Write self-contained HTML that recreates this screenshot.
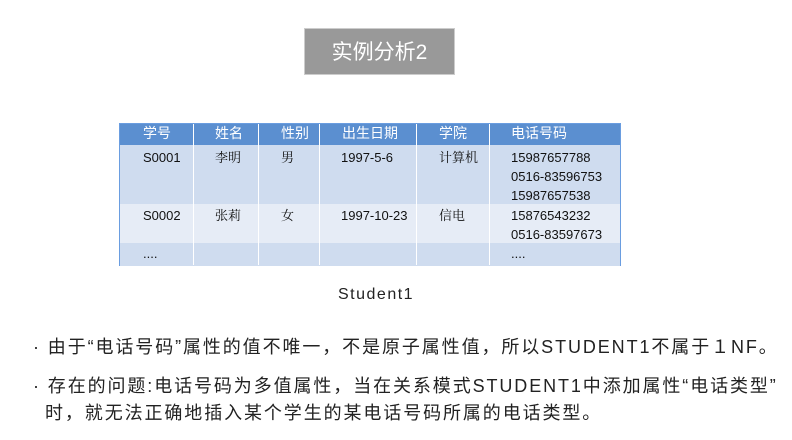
<!DOCTYPE html>
<html><head><meta charset="utf-8"><style>
body{margin:0;width:792px;height:440px;background:#fff;position:relative;overflow:hidden;font-family:"Liberation Sans","Noto Sans CJK SC",sans-serif}
.t{position:absolute;left:304px;top:28px;width:151px;height:47px;background:#999;color:#fff;font-size:21px;line-height:47px;text-align:center;border:1px solid #ccc;box-sizing:border-box}
.tb{position:absolute;left:119px;top:123px;width:502px;height:143px;border:1px solid #6a9de0;box-sizing:border-box;background:#cfdcef}
.r{position:absolute;left:0;width:100%}
.c{position:absolute;top:0;height:100%;border-left:1px solid #fff;box-sizing:border-box}
.x{position:absolute;font-size:13px;color:#111;line-height:19px;white-space:nowrap;font-family:"Liberation Sans","Noto Serif CJK SC",serif}
.h{color:#fff;font-size:14px;font-family:"Liberation Sans","Noto Sans CJK SC",sans-serif}
.p{position:absolute;font-size:18px;letter-spacing:1.9px;color:#222;left:33px;white-space:nowrap}
</style></head><body>
<div class="t">实例分析2</div>
<div class="tb">
<div class="r" style="top:0;height:21px;background:#5b8fd0"></div>
<div class="r" style="top:21px;height:59px;background:#cfdcef"></div>
<div class="r" style="top:80px;height:39px;background:#e6ecf6"></div>
<div class="r" style="top:119px;height:23px;background:#cfdcef"></div>
<div class="c" style="left:73px"></div><div class="c" style="left:138px"></div><div class="c" style="left:199px"></div><div class="c" style="left:296px"></div><div class="c" style="left:369px"></div>
<span class="x h" style="left:23px;top:0">学号</span><span class="x h" style="left:95px;top:0">姓名</span><span class="x h" style="left:161px;top:0">性别</span><span class="x h" style="left:222px;top:0">出生日期</span><span class="x h" style="left:319px;top:0">学院</span><span class="x h" style="left:391px;top:0">电话号码</span>
<span class="x" style="left:23px;top:24px">S0001</span><span class="x" style="left:95px;top:24px">李明</span><span class="x" style="left:161px;top:24px">男</span><span class="x" style="left:221px;top:24px">1997-5-6</span><span class="x" style="left:319px;top:24px">计算机</span><span class="x" style="left:391px;top:24px">15987657788<br>0516-83596753<br>15987657538</span>
<span class="x" style="left:23px;top:82px">S0002</span><span class="x" style="left:95px;top:82px">张莉</span><span class="x" style="left:161px;top:82px">女</span><span class="x" style="left:221px;top:82px">1997-10-23</span><span class="x" style="left:319px;top:82px">信电</span><span class="x" style="left:391px;top:82px">15876543232<br>0516-83597673</span>
<span class="x" style="left:23px;top:120px">....</span><span class="x" style="left:391px;top:120px">....</span>
</div>
<div style="position:absolute;left:338px;top:286px;font-size:16px;letter-spacing:1.5px;color:#222">Student1</div>
<div class="p" style="top:333px">· 由于“电话号码”属性的值不唯一，不是原子属性值，所以STUDENT1不属于１NF。</div>
<div class="p" style="top:372px">· 存在的问题:电话号码为多值属性，当在关系模式STUDENT1中添加属性“电话类型”</div>
<div class="p" style="top:399px;left:45px">时，就无法正确地插入某个学生的某电话号码所属的电话类型。</div>
</body></html>
